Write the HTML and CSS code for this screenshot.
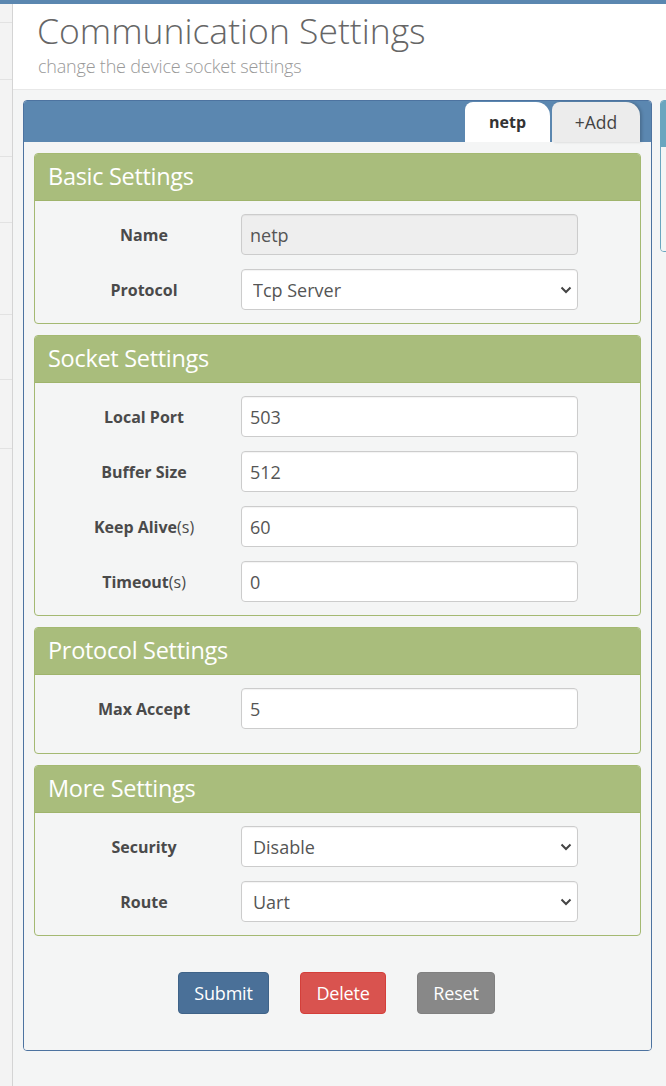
FILE: index.html
```html
<!DOCTYPE html>
<html>
<head>
<meta charset="utf-8">
<link rel="stylesheet" href="styles.css">
</head>
<body>
<div class="topbar"></div>
<div class="layout">
  <aside class="sidebar">
    <div class="sb-item h19"></div>
    <div class="sb-item h56"></div>
    <div class="sb-item h77"></div>
    <div class="sb-item h66"></div>
    <div class="sb-item h92"></div>
    <div class="sb-item h65"></div>
    <div class="sb-item h69"></div>
  </aside>
  <main class="main">
    <header class="page-header">
      <h1 class="title">Communication Settings</h1>
      <p class="subtitle">change the device socket settings</p>
    </header>
    <div class="content">
      <section class="panel">
        <div class="panel-head">
          <div class="tab active">netp</div>
          <div class="tab">+Add</div>
        </div>
        <div class="panel-body">
          <div class="group">
            <div class="group-head">Basic Settings</div>
            <div class="group-body">
              <div class="row"><label class="lbl">Name</label><input class="field disabled" value="netp" disabled></div>
              <div class="row"><label class="lbl">Protocol</label>
                <div class="select-wrap"><select class="field"><option>Tcp Server</option></select>
                  <svg class="chev" width="12" height="8" viewBox="0 0 12 8"><path d="M1.5 1.5 L6 6 L10.5 1.5" fill="none" stroke="#444" stroke-width="2"/></svg></div>
              </div>
            </div>
          </div>
          <div class="group">
            <div class="group-head">Socket Settings</div>
            <div class="group-body">
              <div class="row"><label class="lbl">Local Port</label><input class="field" value="503"></div>
              <div class="row"><label class="lbl">Buffer Size</label><input class="field" value="512"></div>
              <div class="row"><label class="lbl">Keep Alive<span class="unit">(s)</span></label><input class="field" value="60"></div>
              <div class="row"><label class="lbl">Timeout<span class="unit">(s)</span></label><input class="field" value="0"></div>
            </div>
          </div>
          <div class="group">
            <div class="group-head">Protocol Settings</div>
            <div class="group-body tall">
              <div class="row"><label class="lbl">Max Accept</label><input class="field" value="5"></div>
            </div>
          </div>
          <div class="group">
            <div class="group-head">More Settings</div>
            <div class="group-body">
              <div class="row"><label class="lbl">Security</label>
                <div class="select-wrap"><select class="field"><option>Disable</option></select>
                  <svg class="chev" width="12" height="8" viewBox="0 0 12 8"><path d="M1.5 1.5 L6 6 L10.5 1.5" fill="none" stroke="#444" stroke-width="2"/></svg></div>
              </div>
              <div class="row"><label class="lbl">Route</label>
                <div class="select-wrap"><select class="field"><option>Uart</option></select>
                  <svg class="chev" width="12" height="8" viewBox="0 0 12 8"><path d="M1.5 1.5 L6 6 L10.5 1.5" fill="none" stroke="#444" stroke-width="2"/></svg></div>
              </div>
            </div>
          </div>
          <div class="actions">
            <button class="btn btn-submit">Submit</button>
            <button class="btn btn-delete">Delete</button>
            <button class="btn btn-reset">Reset</button>
          </div>
        </div>
      </section>
      <section class="panel2">
        <div class="panel2-head"></div>
        <div class="panel2-body"></div>
      </section>
    </div>
  </main>
</div>
</body>
</html>
```
FILE: styles.css
```css
html, body {
  margin: 0;
  padding: 0;
  height: 100%;
  overflow: hidden;
}
body {
  background: #f4f5f5;
  font-family: "Open Sans", "Noto Sans", sans-serif;
  color: #555;
}
.topbar {
  height: 4px;
  background: #5b87b0;
}
.layout {
  display: flex;
  min-height: 1082px;
}
.sidebar {
  width: 12px;
  flex: none;
  background: #f3f3f3;
  border-right: 1px solid #d4d4d4;
}
.sb-item { border-bottom: 1px solid #e2e2e2; }
.h19 { height: 18px; }
.h56 { height: 56px; }
.h77 { height: 76px; }
.h66 { height: 65px; }
.h92 { height: 91px; }
.h65 { height: 64px; }
.h69 { height: 68px; }
.main {
  flex: 1;
  min-width: 0;
  overflow: hidden;
}
.page-header {
  background: #fff;
  border-bottom: 1px solid #e8e8e8;
  padding-left: 24px;
  box-sizing: border-box;
  height: 86px;
}
.title {
  margin: 0;
  padding-top: 3px;
  font-weight: 300;
  font-size: 35.5px;
  line-height: 46px;
  color: #666;
}
.subtitle {
  margin: 1px 0 0 1px;
  font-size: 18px;
  line-height: 24px;
  font-weight: 300;
  color: #999;
  letter-spacing: -0.2px;
}
.content {
  display: flex;
  gap: 8px;
  padding: 10px 0 0 10px;
  width: 1000px;
  align-items: flex-start;
}
.panel {
  width: 629px;
  flex: none;
  box-sizing: border-box;
  border: 1px solid #4d73a0;
  border-radius: 4px;
  overflow: hidden;
}
.panel-head {
  height: 41px;
  background: #5b87b0;
  display: flex;
  justify-content: flex-end;
  align-items: flex-end;
  gap: 2px;
  padding-right: 11px;
}
.tab {
  height: 40px;
  box-sizing: border-box;
  border-radius: 8px 14px 0 0;
  display: flex;
  align-items: center;
  justify-content: center;
  font-size: 17.5px;
  color: #444;
  background: #ececec;
  width: 88px;
  box-shadow: 2px 0 3px rgba(0,0,0,0.18);
}
.tab.active {
  background: #fff;
  font-size: 16px;
  font-weight: 700;
  color: #333;
  width: 85px;
  box-shadow: none;
}
.panel-body {
  padding: 11px 10px 36px 10px;
  background: #f4f5f5;
}
.group {
  border: 1px solid #a4b972;
  border-radius: 4px;
  margin-bottom: 11px;
  overflow: hidden;
}
.group-head {
  background: #a9bd7c;
  height: 47px;
  border-bottom: 1px solid #9fb46c;
  box-sizing: border-box;
  padding-left: 13px;
  color: #fff;
  font-size: 23.5px;
  line-height: 45px;
  letter-spacing: -0.3px;
}
.group-body {
  padding: 13px 0 13px 0;
  display: flex;
  flex-direction: column;
  gap: 14px;
}
.group-body.tall { padding-bottom: 24px; }
.row {
  display: flex;
  align-items: center;
}
.lbl {
  width: 206px;
  box-sizing: border-box;
  padding-left: 12px;
  text-align: center;
  font-weight: 700;
  font-size: 16px;
  color: #4a4a4a;
}
.unit {
  font-weight: 400;
}
.field {
  width: 337px;
  height: 41px;
  box-sizing: border-box;
  border: 1px solid #ccc;
  border-radius: 4px;
  background: #fff;
  padding: 0 8px;
  font-family: "Open Sans", "Noto Sans", sans-serif;
  font-size: 18px;
  color: #555;
  box-shadow: inset 0 1px 1px rgba(0,0,0,0.05);
  outline: none;
}
.field.disabled {
  background: #eee;
}
.select-wrap {
  position: relative;
  width: 337px;
}
select.field {
  appearance: none;
  -webkit-appearance: none;
  padding-left: 11px;
}
.chev {
  position: absolute;
  right: 6px;
  top: 17px;
}
.actions {
  display: flex;
  justify-content: center;
  gap: 31px;
  padding-top: 25px;
  padding-right: 2px;
}
.btn {
  height: 42px;
  border-radius: 4px;
  border: 1px solid transparent;
  color: #fff;
  font-family: "Open Sans", "Noto Sans", sans-serif;
  font-size: 18px;
  padding: 0;
  letter-spacing: -0.2px;
}
.btn-submit { background: #4a7098; border-color: #3f6388; width: 91px; }
.btn-delete { background: #d9534f; border-color: #d43f3a; width: 86px; }
.btn-reset { background: #888; border-color: #808080; width: 78px; }
.panel2 {
  width: 300px;
  flex: none;
  border: 1px solid #6aa6bf;
  border-radius: 4px;
  overflow: hidden;
}
.panel2-head {
  height: 46px;
  background: #6aa6bf;
}
.panel2-body {
  height: 104px;
  background: #f4f5f5;
}
```
